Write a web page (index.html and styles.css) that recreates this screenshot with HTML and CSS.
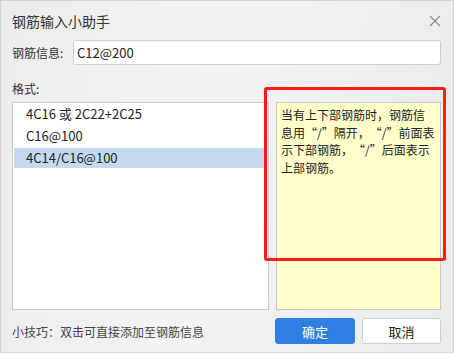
FILE: index.html
```html
<!DOCTYPE html>
<html lang="zh-CN">
<head>
    <meta charset="UTF-8">
    <title>钢筋输入小助手</title>
    <link rel="stylesheet" href="styles.css">
</head>
<body>
    <div class="dialog">
        <div class="title-bar">
            <span class="title">钢筋输入小助手</span>
            <svg class="close" width="12" height="12" viewBox="0 0 12 12">
                <path d="M1 1L11 11M11 1L1 11" stroke="#8a8a8a" stroke-width="1.2" fill="none"/>
            </svg>
        </div>

        <div class="info-row">
            <span class="info-label">钢筋信息:</span>
            <div class="info-input">C12@200</div>
        </div>

        <div class="format-label">格式:</div>

        <div class="panels">
            <ul class="format-list">
                <li>4C16 或 2C22+2C25</li>
                <li>C16@100</li>
                <li class="selected">4C14/C16@100</li>
            </ul>
            <div class="hint">当有上下部钢筋时，钢筋信息用<span class="ql">“</span>/<span class="qr">”</span>隔开，<span class="ql">“</span>/<span class="qr">”</span>前面表示下部钢筋，<span class="ql">“</span>/<span class="qr">”</span>后面表示上部钢筋。</div>
        </div>

        <div class="footer">
            <span class="tip">小技巧：双击可直接添加至钢筋信息</span>
            <div class="buttons">
                <button class="btn btn-primary">确定</button>
                <button class="btn">取消</button>
            </div>
        </div>

        <div class="mark"></div>
    </div>
</body>
</html>
```

FILE: styles.css
```css
* {
    margin: 0;
    padding: 0;
    box-sizing: border-box;
}

body {
    background: #fff;
    font-family: "Noto Sans CJK SC", sans-serif;
}

.dialog {
    position: relative;
    width: 454px;
    height: 353px;
    border: 1px solid #d2d2d2;
    background: linear-gradient(100deg, #ececec 0%, #f3f3f3 45%, #ebebeb 100%);
    padding: 0 12px 0 11px;
    display: flex;
    flex-direction: column;
    font-size: 12px;
    color: #222;
}

.title-bar {
    height: 39px;
    display: flex;
    align-items: center;
    justify-content: space-between;
}

.title {
    font-size: 14px;
    color: #333;
}

.info-row {
    height: 25px;
    display: flex;
    align-items: center;
}

.info-label {
    width: 61px;
    color: #333;
}

.info-input {
    flex: 1;
    height: 25px;
    line-height: 23px;
    padding-left: 3px;
    background: #fff;
    border: 1px solid #cfcfcf;
    border-radius: 3px;
    font-size: 13px;
}

.format-label {
    height: 37px;
    padding-top: 9px;
    display: flex;
    align-items: center;
    color: #333;
}

.panels {
    height: 208px;
    display: flex;
    gap: 7px;
}

.format-list {
    list-style: none;
    width: 257px;
    background: #fff;
    border: 1px solid #c8c8c8;
    padding: 1px;
    display: flex;
    flex-direction: column;
    gap: 2px;
}

.format-list li {
    height: 20px;
    line-height: 20px;
    padding-left: 12px;
    font-size: 13px;
}

.format-list li.selected {
    background: #c4d9f0;
}

.hint {
    flex: 1;
    background: #ffffcc;
    border: 1px solid #c8c8c8;
    padding: 3px 4px;
    line-height: 17.5px;
}

/* full-width quotes as on Windows */
.hint .ql,
.hint .qr {
    display: inline-block;
    width: 12px;
}

.hint .ql {
    text-align: right;
}

.hint .qr {
    text-align: left;
}

.footer {
    flex: 1;
    display: flex;
    align-items: center;
    justify-content: space-between;
}

.tip {
    color: #444;
}

.buttons {
    display: flex;
    gap: 7px;
}

.btn {
    width: 79px;
    height: 26px;
    border: 1px solid #cfcfcf;
    border-radius: 3px;
    background: #fff;
    font-family: inherit;
    font-size: 13px;
    color: #222;
}

.btn-primary {
    width: 80px;
    border-color: #2f80e2;
    background: #2f80e2;
    color: #fff;
}

.mark {
    position: absolute;
    left: 263px;
    top: 86px;
    width: 182px;
    height: 174px;
    border: 3px solid #ff1c14;
    border-radius: 3px;
}
```
